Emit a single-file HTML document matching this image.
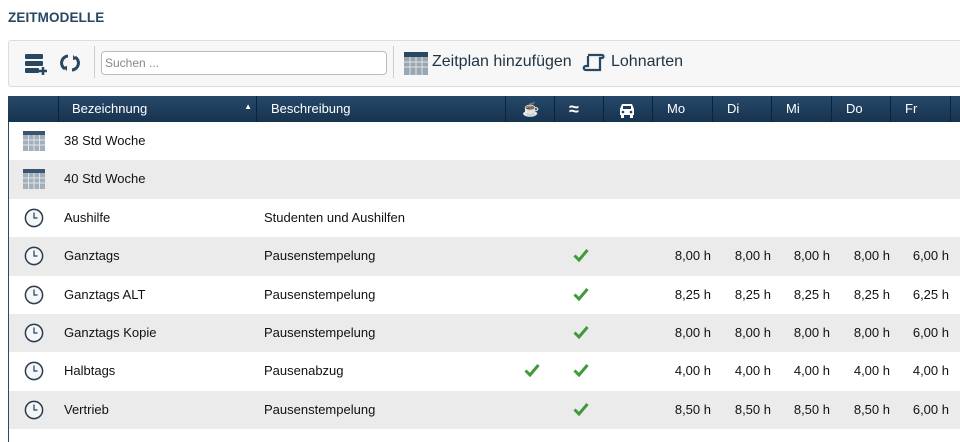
<!DOCTYPE html>
<html><head><meta charset="utf-8"><style>
*{margin:0;padding:0;box-sizing:border-box}
html,body{width:960px;height:442px;overflow:hidden}
body{background:#fff;font-family:"Liberation Sans",sans-serif;position:relative;color:#111}
.abs{position:absolute}
.title{left:8px;top:10px;font-size:13.5px;font-weight:bold;color:#284760;letter-spacing:0.1px}
.tb{left:8px;top:40px;width:960px;height:47px;background:#f7f7f7;border:1px solid #dcdcdc;border-radius:3px}
.hdr{left:8px;top:96px;width:960px;height:26px;background:linear-gradient(#27486a,#17344f);}
.hc{position:absolute;top:0;height:26px;border-left:1px solid #0d2438;color:#fff;font-size:13px;line-height:26px;padding-left:14px}
.row{position:absolute;left:8px;width:952px;height:38.4px;font-size:13px;border-left:1px solid #2a4a66}
.g{background:#ebebeb}
.row span{position:absolute;top:0;line-height:38px}
.num{text-align:right;width:57px}
.ck{top:0}
</style></head><body>
<div class="abs title">ZEITMODELLE</div>
<div class="abs tb"></div>
<svg class="abs" style="left:24px;top:52px" width="24" height="24" viewBox="0 0 24 24"><rect x="1" y="2" width="18" height="5" rx="1" fill="#284760"/><rect x="1" y="9" width="18" height="5" rx="1" fill="#284760"/><rect x="1" y="16" width="14" height="5" rx="1" fill="#284760"/><path d="M19 15v8M15 19h8" stroke="#284760" stroke-width="2.5"/></svg>
<svg class="abs" style="left:60px;top:53px" width="20" height="20" viewBox="0 0 20 20"><path d="M8 3A7 7 0 0 0 5 16" stroke="#284760" stroke-width="3" fill="none"/><path d="M12 17A7 7 0 0 0 15 4" stroke="#284760" stroke-width="3" fill="none"/><path d="M3 14l4 4 0-5z M17 6l-4-4 0 5z" fill="#284760"/></svg>
<div class="abs" style="left:94px;top:46px;width:1px;height:32px;background:#ccc"></div>
<div class="abs" style="left:101px;top:51px;width:286px;height:24px;border:1px solid #bbb;border-radius:4px;background:#fff;font-size:12px;color:#888;line-height:22px;padding-left:3px">Suchen ...</div>
<div class="abs" style="left:393px;top:46px;width:1px;height:32px;background:#ccc"></div>
<svg class="abs" style="left:404px;top:52px" width="24" height="23" viewBox="0 0 24 23"><rect x="0" y="0" width="24" height="23" fill="#9aa7b3"/><rect x="0" y="0" width="24" height="5" fill="#284760"/><path d="M0 10h24M0 15h24M6 5v18M12 5v18M18 5v18" stroke="#dde3e8" stroke-width="1"/></svg>
<div class="abs" style="left:432px;top:53px;font-size:16px;color:#1f3345">Zeitplan hinzufügen</div>
<svg class="abs" style="left:582px;top:53px" width="24" height="20" viewBox="0 0 24 20"><path d="M6 2h14c2 0 2 3 0 3h-2v12H4c-3 0-3-4 0-4h2V3" stroke="#284760" stroke-width="2.2" fill="none"/></svg>
<div class="abs" style="left:611px;top:53px;font-size:16px;color:#1f3345">Lohnarten</div>
<div class="abs hdr">
<div class="hc" style="left:0;width:50px;border-left:none"></div>
<div class="hc" style="left:50px;width:198px;padding-left:13px">Bezeichnung<span style="position:absolute;right:4px;top:-2px;font-size:8px">▲</span></div>
<div class="hc" style="left:248px;width:249px">Beschreibung</div>
<div class="hc" style="left:497px;width:49px;padding-left:16px;font-size:14px">☕</div>
<div class="hc" style="left:546px;width:49px;padding-left:14px;font-size:18px;font-weight:bold">≈</div>
<div class="hc" style="left:595px;width:49px;padding-left:14px"><svg width="18" height="16" viewBox="0 0 18 16" style="vertical-align:middle"><path d="M4 2h10l2 5v6H2V7z" fill="#fff"/><rect x="5" y="4" width="8" height="3" fill="#1f3d5a"/><circle cx="5" cy="10" r="1.3" fill="#1f3d5a"/><circle cx="13" cy="10" r="1.3" fill="#1f3d5a"/><rect x="3" y="13" width="3" height="3" fill="#fff"/><rect x="12" y="13" width="3" height="3" fill="#fff"/></svg></div>
<div class="hc" style="left:644px;width:60px">Mo</div>
<div class="hc" style="left:704px;width:59px">Di</div>
<div class="hc" style="left:763px;width:60px">Mi</div>
<div class="hc" style="left:823px;width:59px">Do</div>
<div class="hc" style="left:882px;width:60px">Fr</div>
<div class="hc" style="left:942px;width:20px"></div>
</div>
<svg width="0" height="0" style="position:absolute"><defs>
<symbol id="cal" viewBox="0 0 22 20"><rect width="22" height="20" fill="#a3afba"/><rect width="22" height="4" fill="#3a5670"/><path d="M0 9h22M0 14h22M5.5 4v16M11 4v16M16.5 4v16" stroke="#dfe4e8"/></symbol>
<symbol id="clk" viewBox="0 0 20 20"><circle cx="10" cy="10" r="8.6" fill="#f4f6f8" stroke="#2a3d50" stroke-width="1.5"/><path d="M10 4.5v5.5h3.5" stroke="#2a3d50" stroke-width="1.2" fill="none"/></symbol>
<symbol id="ck" viewBox="0 0 16 14"><path d="M1.5 7.5l4.5 4.5 8.5-10" stroke="#3f9a3a" stroke-width="3" fill="none"/></symbol>
</defs></svg>
<div class="row" style="top:122px"><span style="left:14px"><svg width="22" height="20" style="margin-top:9px"><use href="#cal"/></svg></span><span style="left:55px">38 Std Woche</span></div>
<div class="row g" style="top:160.4px"><span style="left:14px"><svg width="22" height="20" style="margin-top:9px"><use href="#cal"/></svg></span><span style="left:55px">40 Std Woche</span></div>
<div class="row" style="top:198.8px"><span style="left:15px"><svg width="20" height="20" style="margin-top:9px"><use href="#clk"/></svg></span><span style="left:55px">Aushilfe</span><span style="left:255px">Studenten und Aushilfen</span></div>
<div class="row g" style="top:237.2px"><span style="left:15px"><svg width="20" height="20" style="margin-top:9px"><use href="#clk"/></svg></span><span style="left:55px">Ganztags</span><span style="left:255px">Pausenstempelung</span><span style="left:564px"><svg width="16" height="14" style="margin-top:11px"><use href="#ck"/></svg></span><span class="num" style="left:645px">8,00 h</span><span class="num" style="left:705px">8,00 h</span><span class="num" style="left:764px">8,00 h</span><span class="num" style="left:824px">8,00 h</span><span class="num" style="left:883px">6,00 h</span></div>
<div class="row" style="top:275.6px"><span style="left:15px"><svg width="20" height="20" style="margin-top:9px"><use href="#clk"/></svg></span><span style="left:55px">Ganztags ALT</span><span style="left:255px">Pausenstempelung</span><span style="left:564px"><svg width="16" height="14" style="margin-top:11px"><use href="#ck"/></svg></span><span class="num" style="left:645px">8,25 h</span><span class="num" style="left:705px">8,25 h</span><span class="num" style="left:764px">8,25 h</span><span class="num" style="left:824px">8,25 h</span><span class="num" style="left:883px">6,25 h</span></div>
<div class="row g" style="top:314px"><span style="left:15px"><svg width="20" height="20" style="margin-top:9px"><use href="#clk"/></svg></span><span style="left:55px">Ganztags Kopie</span><span style="left:255px">Pausenstempelung</span><span style="left:564px"><svg width="16" height="14" style="margin-top:11px"><use href="#ck"/></svg></span><span class="num" style="left:645px">8,00 h</span><span class="num" style="left:705px">8,00 h</span><span class="num" style="left:764px">8,00 h</span><span class="num" style="left:824px">8,00 h</span><span class="num" style="left:883px">6,00 h</span></div>
<div class="row" style="top:352.4px"><span style="left:15px"><svg width="20" height="20" style="margin-top:9px"><use href="#clk"/></svg></span><span style="left:55px">Halbtags</span><span style="left:255px">Pausenabzug</span><span style="left:515px"><svg width="16" height="14" style="margin-top:11px"><use href="#ck"/></svg></span><span style="left:564px"><svg width="16" height="14" style="margin-top:11px"><use href="#ck"/></svg></span><span class="num" style="left:645px">4,00 h</span><span class="num" style="left:705px">4,00 h</span><span class="num" style="left:764px">4,00 h</span><span class="num" style="left:824px">4,00 h</span><span class="num" style="left:883px">4,00 h</span></div>
<div class="row g" style="top:390.8px"><span style="left:15px"><svg width="20" height="20" style="margin-top:9px"><use href="#clk"/></svg></span><span style="left:55px">Vertrieb</span><span style="left:255px">Pausenstempelung</span><span style="left:564px"><svg width="16" height="14" style="margin-top:11px"><use href="#ck"/></svg></span><span class="num" style="left:645px">8,50 h</span><span class="num" style="left:705px">8,50 h</span><span class="num" style="left:764px">8,50 h</span><span class="num" style="left:824px">8,50 h</span><span class="num" style="left:883px">6,00 h</span></div>
<div class="row" style="top:429.2px;height:13px"></div>
</body></html>
